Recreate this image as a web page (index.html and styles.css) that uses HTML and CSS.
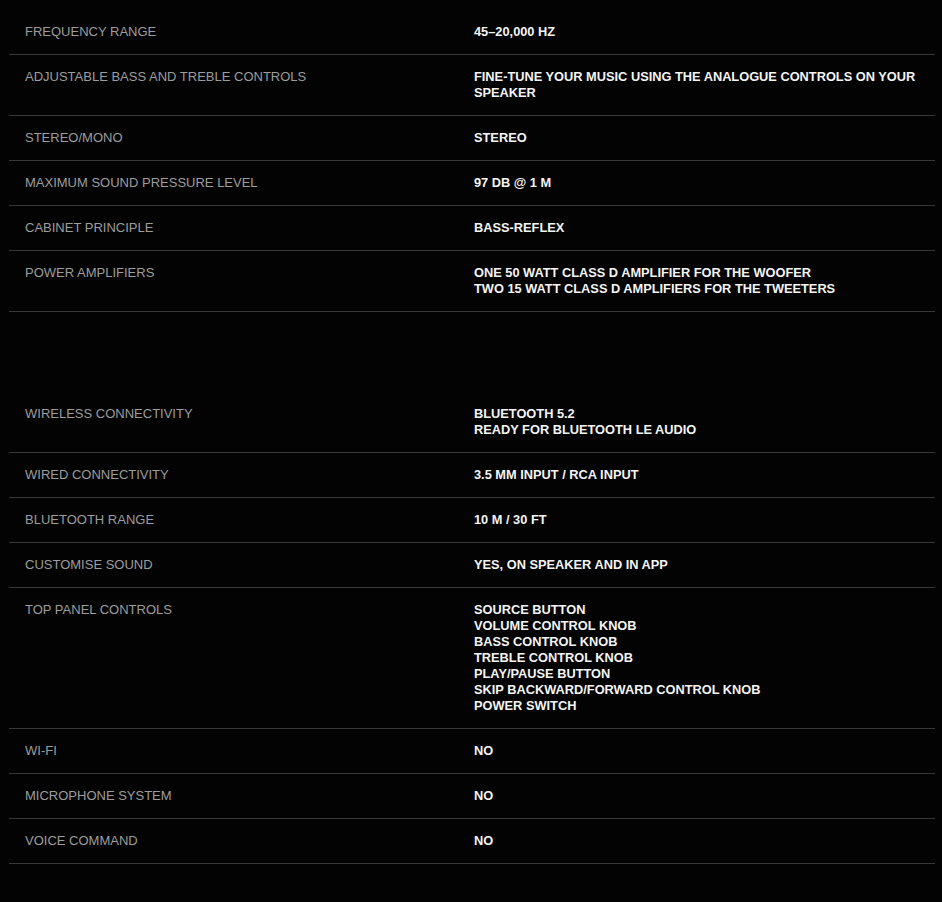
FILE: index.html
```html
<!DOCTYPE html>
<html lang="en">
<head>
<meta charset="utf-8">
<title>Specifications</title>
<link rel="stylesheet" href="styles.css">
</head>
<body>
<div class="specs">
  <dl class="spec-table">
    <div class="row"><dt>Frequency range</dt><dd>45–20,000 Hz</dd></div>
    <div class="row"><dt>Adjustable bass and treble controls</dt><dd>Fine-tune your music using the analogue controls on your speaker</dd></div>
    <div class="row"><dt>Stereo/Mono</dt><dd>Stereo</dd></div>
    <div class="row"><dt>Maximum sound pressure level</dt><dd>97 dB @ 1 m</dd></div>
    <div class="row"><dt>Cabinet principle</dt><dd>Bass-reflex</dd></div>
    <div class="row"><dt>Power amplifiers</dt><dd>One 50 Watt Class D amplifier for the woofer<br>Two 15 Watt Class D amplifiers for the tweeters</dd></div>
  </dl>
  <dl class="spec-table">
    <div class="row"><dt>Wireless connectivity</dt><dd>Bluetooth 5.2<br>Ready for Bluetooth LE Audio</dd></div>
    <div class="row"><dt>Wired connectivity</dt><dd>3.5 mm input / RCA input</dd></div>
    <div class="row"><dt>Bluetooth range</dt><dd>10 m / 30 ft</dd></div>
    <div class="row"><dt>Customise sound</dt><dd>Yes, on speaker and in app</dd></div>
    <div class="row"><dt>Top panel controls</dt><dd>Source button<br>Volume control knob<br>Bass control knob<br>Treble control knob<br>Play/pause button<br>Skip backward/forward control knob<br>Power switch</dd></div>
    <div class="row"><dt>Wi-Fi</dt><dd>No</dd></div>
    <div class="row"><dt>Microphone system</dt><dd>No</dd></div>
    <div class="row"><dt>Voice command</dt><dd>No</dd></div>
  </dl>
</div>
</body>
</html>
```

FILE: styles.css
```css
html, body {
  background: #030303;
}
body {
  margin: 0;
  padding: 10px 7px 0 9px;
  font-family: "Liberation Sans", Arial, Helvetica, sans-serif;
  font-size: 13px;
  line-height: 16px;
  text-transform: uppercase;
}
.specs {
  display: flex;
  flex-direction: column;
  gap: 80px;
}
.spec-table {
  margin: 0;
  display: flex;
  flex-direction: column;
}
.row {
  display: grid;
  grid-template-columns: 465px 1fr;
  border-bottom: 1px solid #383838;
}
.row dt {
  padding: 14px 16px;
  color: #9d9d9d;
  font-weight: 400;
  font-size: 13px;
}
.row dd {
  margin: 0;
  padding: 14px 16px 14px 0;
  color: #f4f4f4;
  font-weight: 700;
  font-size: 12.8px;
}
```
